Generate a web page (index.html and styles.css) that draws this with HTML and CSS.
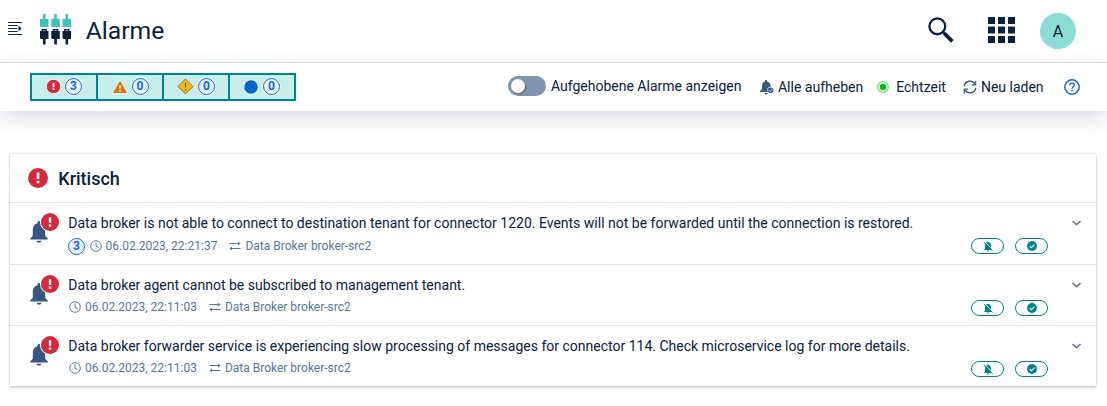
FILE: index.html
```html
<!DOCTYPE html>
<html lang="de">
<head>
<meta charset="utf-8">
<title>Alarme</title>
<link rel="stylesheet" href="styles.css">
</head>
<body>
<svg class="defs" width="0" height="0">
  <symbol id="critical" viewBox="0 0 20 20"><circle cx="10" cy="10" r="10" fill="#d32b3c"/><path d="M8.700 4.600h2.600v6.500H8.700zM8.700 12.700h2.600v2.500H8.700z" fill="#fff"/></symbol>
  <symbol id="bell" viewBox="0 0 18 22"><path d="M9 0c1 0 1.500.6 1.500 1.500v.8c3 .7 4.700 3.200 4.700 6.500v6l2.600 2.700v1H.2v-1l2.600-2.700v-6c0-3.300 1.700-5.800 4.700-6.500v-.8C7.500.6 8 0 9 0zM6.500 19.800h5c-.2 1.300-1.200 2-2.500 2s-2.300-.7-2.500-2z" fill="#37597f"/></symbol>
  <symbol id="clock" viewBox="0 0 12 12"><circle cx="6" cy="6" r="5.300" fill="none" stroke="#5f7d9d" stroke-width="1"/><path d="M6 2.500V6.200L8.600 7.600" fill="none" stroke="#5f7d9d"/></symbol>
  <symbol id="swap" viewBox="0 0 12 10"><path d="M.5 2.500H11M1 7.500h10.500" stroke="#56779a" fill="none"/><path d="M9 .5l2.500 2L9 4.500zM3 5.500l-2.500 2 2.500 2z" fill="#56779a"/></symbol>
  <symbol id="chevron" viewBox="0 0 9 6"><path d="M.5 1l4 3.600L8.500 1" fill="none" stroke="#6b7d93" stroke-width="1.600"/></symbol>
  <symbol id="mute" viewBox="0 0 10 11"><path d="M5 .8c2 .3 3 1.700 3 3.700v3l1 1.500H1l1-1.500v-3c0-2 1-3.400 3-3.700zM4 9.500h2c0 .8-.4 1.100-1 1.100s-1-.3-1-1.100z" fill="#00838f"/><path d="M1.600.5l8.400 8.400" stroke="#fff" stroke-width=".8"/><path d="M.8 1l8.700 8.700" stroke="#00838f" stroke-width="1"/></symbol>
  <symbol id="check" viewBox="0 0 10 10"><circle cx="5" cy="5" r="4.900" fill="#00838f"/><path d="M2.700 5.100l1.700 1.700L7.500 3.600" fill="none" stroke="#fff" stroke-width="1.100"/></symbol>
</svg>

<header class="topbar">
  <svg class="menu-icon" width="14" height="14" viewBox="0 0 14 14"><path d="M0 .5h14M0 3.500h9.500M0 6.500h9.500M0 9.500h9.500M0 12.500h14" stroke="#0b2545" stroke-width="1.200"/><path d="M10.500 3.500l3.200 3-3.200 3z" fill="#0b2545"/></svg>
  <svg class="app-icon" width="32" height="31" viewBox="0 0 32 31">
    <path d="M0 5h3V0h2.500v5h3v8H0zM11.300 5h3V0h2.500v5h3v8h-8.500zM22.500 5h3V0H28v5h3v8h-8.500z" fill="#3cc3bb"/>
    <path id="plug" d="M0 17h1.500v-2h5.500v2h1.500v8H5.600v5.500H3V25H.7L0 24z" fill="#0b2140"/><path d="M3 16.500h2.500" stroke="#8f9dac"/>
    <use href="#plug" x="11.300"/><path d="M14.300 16.500h2.500" stroke="#8f9dac"/><use href="#plug" x="22.500"/><path d="M25.500 16.500H28" stroke="#8f9dac"/>
  </svg>
  <h1>Alarme</h1>
  <svg class="search-icon" width="26" height="26" viewBox="0 0 27 27"><circle cx="9.700" cy="9.700" r="8.200" fill="none" stroke="#0b2140" stroke-width="2.400"/><path d="M15.300 15.300l2.500 2.500" stroke="#0b2140" stroke-width="2.400"/><path d="M17 17l8.300 8.300" stroke="#0b2140" stroke-width="3.800"/></svg>
  <svg class="grid-icon" width="27" height="26" viewBox="0 0 27 26"><path d="M0 0h7v7H0zM10 0h7v7h-7zM20 0h7v7h-7zM0 9.500h7v7H0zM10 9.500h7v7h-7zM20 9.500h7v7h-7zM0 19h7v7H0zM10 19h7v7h-7zM20 19h7v7h-7z" fill="#0b2140"/></svg>
  <div class="avatar">A</div>
</header>

<nav class="actionbar">
  <div class="filters">
    <div class="filter"><svg width="15" height="15" viewBox="-1 -1 22 22"><circle cx="10" cy="10" r="11" fill="#fff" opacity=".6"/><use href="#critical" width="20" height="20"/></svg><span class="count">3</span></div>
    <div class="filter"><svg width="16" height="14" viewBox="0 0 16 14"><path d="M8 0l8 14H0z" fill="#fff" opacity=".6"/><path d="M8 .8L15 13H1z" fill="#e07300"/><path d="M7.300 5h1.500v3.800H7.300zM7.300 10h1.500v1.500H7.300z" fill="#fff"/></svg><span class="count">0</span></div>
    <div class="filter"><svg width="17" height="17" viewBox="0 0 17 17"><path d="M8.500 1L16 8.500 8.500 16 1 8.500z" fill="#f2b91d" stroke="#8d7420" stroke-width="1"/><path d="M7.900 4.500h1.300v5H7.900zM7.900 11h1.300v1.400H7.900z" fill="#6d5a17"/></svg><span class="count">0</span></div>
    <div class="filter"><svg width="14" height="14" viewBox="0 0 14 14"><circle cx="7" cy="7" r="6.700" fill="#0766cf"/></svg><span class="count">0</span></div>
  </div>
  <div class="toggle"><span class="knob"></span></div>
  <span class="toggle-label">Aufgehobene Alarme anzeigen</span>
  <div class="action clear"><svg width="14" height="15" viewBox="0 0 14 15"><path d="M6 0c.7 0 1 .4 1 1v.4c2.400.5 3.500 2.200 3.500 4.400v1c-2 .2-3.200 1.600-3.200 3.300 0 1 .3 1.500.7 2H0v-1l2-2V5.800c0-2.200 1-3.900 3-4.400V1c0-.6.300-1 1-1zM4.300 13h3.500c-.2 1-.8 1.600-1.700 1.600S4.500 14 4.300 13z" fill="#37597f"/><circle cx="10.600" cy="10.300" r="2.800" fill="#37597f"/><path d="M9 10.300l1.200 1.200 2.100-2.200" fill="none" stroke="#fff" stroke-width=".9"/></svg><span>Alle aufheben</span></div>
  <div class="action live"><svg width="12" height="12" viewBox="0 0 12 12"><circle cx="6" cy="6" r="5.200" fill="#fff" stroke="#8ddc89" stroke-width="1.600"/><circle cx="6" cy="6" r="3.200" fill="#0cb80c"/></svg><span>Echtzeit</span></div>
  <div class="action reload"><svg width="14" height="14" viewBox="0 0 14 14"><path d="M1.200 6.200A5.800 5.800 0 0 1 12 4.100M12.800 7.800A5.800 5.800 0 0 1 2 9.900" fill="none" stroke="#37597f" stroke-width="1.300"/><path d="M12.700.8v4H8.800M1.300 13.200v-4h3.900" fill="none" stroke="#37597f" stroke-width="1.200"/></svg><span>Neu laden</span></div>
  <svg class="help" width="16" height="16" viewBox="0 0 16 16"><circle cx="8" cy="8" r="7.200" fill="none" stroke="#1268d3" stroke-width="1.500"/><path d="M5.700 6.300c0-1.400 1-2.200 2.300-2.200s2.300.8 2.300 2c0 1.600-2.200 1.700-2.200 3.400" fill="none" stroke="#1268d3" stroke-width="1.400"/><path d="M7.300 10.800h1.500v1.500H7.300z" fill="#1268d3"/></svg>
</nav>

<main class="card">
  <div class="card-head"><svg width="20" height="20"><use href="#critical"/></svg><h2>Kritisch</h2></div>
  <div class="alarm first">
    <div class="bell"><svg width="18" height="22"><use href="#bell"/></svg><span class="badge"><svg width="18" height="18"><use href="#critical"/></svg></span></div>
    <div class="body">
      <p class="text">Data broker is not able to connect to destination tenant for connector 1220. Events will not be forwarded until the connection is restored.</p>
      <div class="meta"><span class="count">3</span><svg class="clock" width="12" height="12"><use href="#clock"/></svg><span class="time">06.02.2023, 22:21:37</span><svg class="swap" width="12" height="10"><use href="#swap"/></svg><span>Data Broker broker-src2</span></div>
    </div>
    <div class="buttons"><button><svg width="10" height="11"><use href="#mute"/></svg></button><button><svg width="10" height="10"><use href="#check"/></svg></button></div>
    <svg class="chevron" width="9" height="6"><use href="#chevron"/></svg>
  </div>
  <div class="alarm">
    <div class="bell"><svg width="18" height="22"><use href="#bell"/></svg><span class="badge"><svg width="18" height="18"><use href="#critical"/></svg></span></div>
    <div class="body">
      <p class="text">Data broker agent cannot be subscribed to management tenant.</p>
      <div class="meta"><svg class="clock" width="12" height="12"><use href="#clock"/></svg><span class="time">06.02.2023, 22:11:03</span><svg class="swap" width="12" height="10"><use href="#swap"/></svg><span>Data Broker broker-src2</span></div>
    </div>
    <div class="buttons"><button><svg width="10" height="11"><use href="#mute"/></svg></button><button><svg width="10" height="10"><use href="#check"/></svg></button></div>
    <svg class="chevron" width="9" height="6"><use href="#chevron"/></svg>
  </div>
  <div class="alarm">
    <div class="bell"><svg width="18" height="22"><use href="#bell"/></svg><span class="badge"><svg width="18" height="18"><use href="#critical"/></svg></span></div>
    <div class="body">
      <p class="text">Data broker forwarder service is experiencing slow processing of messages for connector 114. Check microservice log for more details.</p>
      <div class="meta"><svg class="clock" width="12" height="12"><use href="#clock"/></svg><span class="time">06.02.2023, 22:11:03</span><svg class="swap" width="12" height="10"><use href="#swap"/></svg><span>Data Broker broker-src2</span></div>
    </div>
    <div class="buttons"><button><svg width="10" height="11"><use href="#mute"/></svg></button><button><svg width="10" height="10"><use href="#check"/></svg></button></div>
    <svg class="chevron" width="9" height="6"><use href="#chevron"/></svg>
  </div>
</main>
</body>
</html>
```
FILE: styles.css
```css
* { box-sizing: border-box; }
body { margin: 0; height: 406px; overflow: hidden; background: #fff; color: #0b2140; font: 14px/20px Roboto, sans-serif; }
svg { display: block; flex: none; }
.defs { display: none; }
h1, h2, p { margin: 0; }

.topbar { display: flex; height: 63px; padding: 0 31px 2px 8px; align-items: center; border-bottom: 1px solid #e1e5ea; }
.menu-icon { margin-bottom: 2px; }
.app-icon { margin-left: 18px; margin-bottom: 1px; }
h1 { margin: 1px 0 0 13.700px; flex: 1; font-size: 24.700px; line-height: 30px; font-weight: 400; }
.grid-icon { margin-left: 34px; }
.avatar { width: 36px; height: 36px; margin-left: 25px; margin-top: 2px; border-radius: 50%; background: #8adcd4; text-align: center; font-size: 16px; line-height: 37px; }

.actionbar { display: flex; height: 48px; padding: 0 27px 0 30px; align-items: center; box-shadow: 0 6px 20px rgba(20, 35, 60, .17); white-space: nowrap; }
.filters { display: flex; width: 266px; height: 28px; border: 2px solid #00838f; background: #c8eeea; }
.filter { display: flex; flex: 1; padding: 0 0 1px 0; align-items: center; justify-content: center; gap: 4px; border-left: 2px solid #00838f; }
.filter:first-child { border-left: 0; }
.filter:last-child { gap: 5px; }
.count { display: block; flex: none; width: 17px; height: 17px; border: 1px solid #1268d3; border-radius: 50%; background: #eaf4ff; box-shadow: 0 0 0 1px rgba(255, 255, 255, .6); color: #1268d3; font-size: 12px; line-height: 15px; font-weight: 700; text-align: center; }
.toggle { width: 38px; height: 20px; margin: 0 0 2px 212px; padding: 3px; border-radius: 10px; background: #8095b0; }
.knob { display: block; width: 14px; height: 14px; border-radius: 50%; background: #fff; box-shadow: 1px 1px 2px rgba(0, 0, 0, .3); }
.toggle-label { margin: 0 0 2px 5px; }
.action { display: flex; align-items: center; gap: 4px; }
.clear { margin-left: 19px; gap: 3.500px; }
.live { margin-left: 14px; gap: 7px; }
.reload { margin-left: 17px; gap: 4px; }
.help { margin-left: auto; }

.card { width: 1086px; margin: 43px 0 0 10px; box-shadow: 0 0 2px 0 rgba(20, 35, 60, .25), 0 2px 2px rgba(20, 35, 60, .17); }
.card-head { display: flex; height: 48px; padding-left: 18px; align-items: center; }
h2 { margin: 1px 0 0 10.300px; font-size: 18px; line-height: 22px; font-weight: 500; }
.alarm { display: flex; height: 61px; padding: 10px 15.500px 0 20px; border-top: 1px solid #e1e5ea; }
.alarm.first { height: 62px; }
.bell { position: relative; width: 18px; padding-top: 8px; }
.badge { position: absolute; left: 11px; top: 0; border-radius: 50%; box-shadow: 0 0 0 1px #fff; }
.body { flex: 1; margin-left: 20.300px; }
.meta { display: flex; height: 18px; margin-top: 3px; align-items: center; color: #56779a; font-size: 12px; line-height: 16px; }
.first .meta { margin-top: 4px; }
.meta .count { margin: 0 4.500px 0 -.3px; }
.clock { margin-right: 4px; }
.alarm:not(.first) .clock { margin-left: .7px; }
.swap { margin: -1px 4px 0 12px; }
.buttons { display: flex; gap: 11px; margin: 25px 23.500px 0 0; }
button { display: flex; width: 33px; height: 16px; padding: 0; align-items: center; justify-content: center; border: 1px solid #00838f; border-radius: 8px; background: #fff; }
.chevron { margin-top: 7px; }
```
